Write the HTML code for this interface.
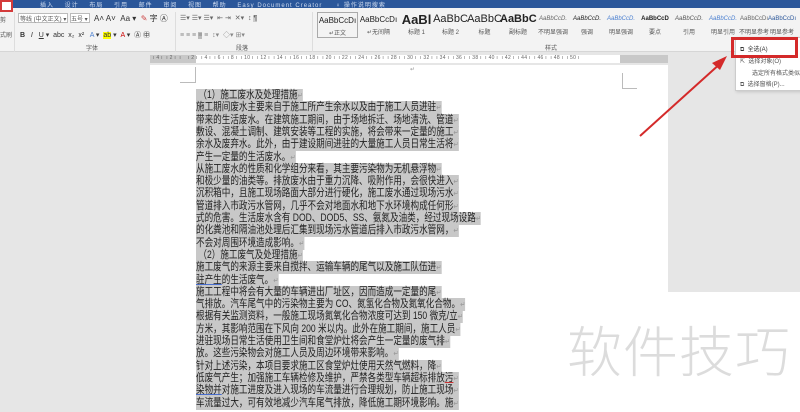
<!DOCTYPE html>
<html><head><meta charset="utf-8"><style>
*{margin:0;padding:0;box-sizing:border-box}
body{width:800px;height:412px;overflow:hidden;background:#e6e6e6;position:relative;font-family:"Liberation Sans","Noto Sans CJK SC",sans-serif}
.a{position:absolute}
.t{font-size:6px;color:#555;white-space:nowrap}
#page{left:150px;top:65px;width:518px;height:347px;background:#fff}
.ln{position:absolute;left:196px;height:12.3px;line-height:12.3px;font-size:11px;white-space:nowrap;color:#222;transform:scaleX(0.78);transform-origin:0 0}
.ln span{background:#c8c8c8;padding:0 0 1px 0}
.ln i{font-style:normal;color:#999;font-size:8px}
.sty{top:12px;width:52px;height:26px;text-align:center;color:#222}
.sty b{display:block;font-weight:normal;font-size:8px;height:15px;line-height:15px}
.sty small{display:block;font-size:6px;color:#555}
</style></head><body>
<div class="a" style="left:0;top:0;width:800px;height:8px;background:#2b579a"></div>
<div class="a t" style="left:40px;top:0;color:#cfdcf0;font-size:6px;letter-spacing:1px">插入 &nbsp;&nbsp; 设计 &nbsp;&nbsp; 布局 &nbsp;&nbsp; 引用 &nbsp;&nbsp; 邮件 &nbsp;&nbsp; 审阅 &nbsp;&nbsp; 视图 &nbsp;&nbsp; 帮助 &nbsp;&nbsp; Easy Document Creator &nbsp;&nbsp;&nbsp; ♀ 操作说明搜索</div>
<div class="a" style="left:0;top:8px;width:800px;height:44px;background:#f3f3f3;border-bottom:1px solid #d6d6d6"></div>
<div class="a" style="left:0;top:0;width:13px;height:12px;border:2px solid #d43b3b;background:#fff"></div>
<div class="a t" style="left:0;top:15px">剪</div><div class="a t" style="left:0;top:30px">式刷</div>
<div class="a" style="left:14px;top:12px;width:1px;height:40px;background:#ddd"></div>
<div class="a" style="left:18px;top:13px;width:50px;height:10px;border:1px solid #bbb;background:#fff"></div>
<div class="a t" style="left:20px;top:14px">等线 (中文正文) ▾</div>
<div class="a" style="left:70px;top:13px;width:20px;height:10px;border:1px solid #bbb;background:#fff"></div>
<div class="a t" style="left:71px;top:14px">五号 ▾</div>
<div class="a t" style="left:94px;top:13px;font-size:8px;color:#333">A˄ A˅ &nbsp;Aa ▾ &nbsp;<span style="color:#c44">✎</span> 字 Ⓐ</div>
<div class="a t" style="left:20px;top:30px;font-size:7px;color:#333"><b>B</b> &nbsp; <i>I</i> &nbsp; <u>U</u> ▾ &nbsp;abc &nbsp;x₂ &nbsp;x² &nbsp; <span style="color:#4a7fd0">A</span> ▾ &nbsp;<span style="background:#ff0">ab</span> ▾ &nbsp;<span style="color:#c00">A</span> ▾ &nbsp;Ⓐ ㊥</div>
<div class="a t" style="left:86px;top:43px">字体</div>
<div class="a" style="left:175px;top:12px;width:1px;height:40px;background:#ddd"></div>
<div class="a t" style="left:180px;top:14px;font-size:7px;color:#666">☰▾ ☰▾ ☰▾ &nbsp;⇤ ⇥ &nbsp;✕▾ &nbsp;↕ <span style="background:#ccc">¶</span></div>
<div class="a t" style="left:180px;top:30px;font-size:7px;color:#888">≡ ≡ ≡ <span style="background:#bbb">≡</span> ≡ &nbsp;↕▾ &nbsp;◇▾ ⊞▾</div>
<div class="a t" style="left:236px;top:43px">段落</div>
<div class="a" style="left:312px;top:12px;width:1px;height:40px;background:#ddd"></div>
<div class="a sty" style="left:317px;border:1px solid #aaa;width:41px"><b>AaBbCcDı</b><small>↵正文</small></div>
<div class="a sty" style="left:358px;width:41px"><b>AaBbCcDı</b><small>↵无间隔</small></div>
<div class="a sty" style="left:399px;width:35px"><b style="font-size:13px;font-weight:bold">AaBl</b><small>标题 1</small></div>
<div class="a sty" style="left:433px;width:35px"><b style="font-size:11px">AaBbC</b><small>标题 2</small></div>
<div class="a sty" style="left:467px;width:35px"><b style="font-size:11px">AaBbC</b><small>标题</small></div>
<div class="a sty" style="left:500px;width:36px"><b style="font-size:11px;font-weight:bold">AaBbC</b><small>副标题</small></div>
<div class="a sty" style="left:535px;width:36px"><b style="font-style:italic;color:#666;font-size:6px">AaBbCcD.</b><small>不明显强调</small></div>
<div class="a sty" style="left:569px;width:36px"><b style="font-style:italic;font-size:6px">AaBbCcD.</b><small>强调</small></div>
<div class="a sty" style="left:603px;width:36px"><b style="font-style:italic;color:#4a7fd0;font-size:6px">AaBbCcD.</b><small>明显强调</small></div>
<div class="a sty" style="left:637px;width:36px"><b style="font-weight:bold;font-size:6px">AaBbCcD</b><small>要点</small></div>
<div class="a sty" style="left:671px;width:36px"><b style="font-style:italic;font-size:6px;color:#555">AaBbCcD.</b><small>引用</small></div>
<div class="a sty" style="left:705px;width:36px"><b style="font-style:italic;font-size:6px;color:#4a7fd0">AaBbCcD.</b><small>明显引用</small></div>
<div class="a sty" style="left:739px;width:30px"><b style="font-size:6px;color:#666">AaBbCcDı</b><small>不明显参考</small></div>
<div class="a sty" style="left:767px;width:30px"><b style="font-size:6px;color:#2b579a">AaBbCcDı</b><small>明显参考</small></div>
<div class="a t" style="left:545px;top:43px">样式</div>
<div class="a" style="left:150px;top:55px;width:518px;height:8px;background:#fff"></div>
<div class="a" style="left:150px;top:55px;width:46px;height:8px;background:#c8c8c8"></div>
<div class="a" style="left:620px;top:55px;width:48px;height:8px;background:#c8c8c8"></div>
<div class="a t" style="left:153px;top:55px;font-size:5px;color:#666;letter-spacing:0.3px">ı 4 ı &nbsp;ı 2 ı &nbsp;ı &nbsp;&nbsp;&nbsp;ı 2 ı &nbsp;ı 4 ı &nbsp;ı 6 ı &nbsp;ı 8 ı &nbsp;ı 10 ı &nbsp;ı 12 ı &nbsp;ı 14 ı &nbsp;ı 16 ı &nbsp;ı 18 ı &nbsp;ı 20 ı &nbsp;ı 22 ı &nbsp;ı 24 ı &nbsp;ı 26 ı &nbsp;ı 28 ı &nbsp;ı 30 ı &nbsp;ı 32 ı &nbsp;ı 34 ı &nbsp;ı 36 ı &nbsp;ı 38 ı &nbsp;ı 40 ı &nbsp;ı 42 ı &nbsp;ı 44 ı &nbsp;ı 46 ı &nbsp;ı 48 ı &nbsp;ı 50 ı</div>
<div class="a" id="page"></div>
<div class="a" style="left:668px;top:292px;width:132px;height:120px;background:#fff"></div>
<div class="a" style="left:195px;top:67px;width:1px;height:15px;background:#bbb"></div>
<div class="a" style="left:180px;top:82px;width:16px;height:1px;background:#bbb"></div>
<div class="a" style="left:622px;top:73px;width:1px;height:15px;background:#bbb"></div>
<div class="a" style="left:622px;top:88px;width:15px;height:1px;background:#bbb"></div>
<div class="a" style="left:410px;top:66px;font-size:6px;color:#999">↵</div>
<div class="ln" style="top:89px"><span>&nbsp;（1）施工废水及处理措施<i>↵</i></span></div>
<div class="ln" style="top:101.3px"><span>施工期间废水主要来自于施工所产生余水以及由于施工人员进驻<i>↵</i></span></div>
<div class="ln" style="top:113.6px"><span>带来的生活废水。在建筑施工期间，由于场地拆迁、场地清洗、管道<i>↵</i></span></div>
<div class="ln" style="top:125.9px"><span>敷设、混凝土调制、建筑安装等工程的实施，将会带来一定量的施工<i>↵</i></span></div>
<div class="ln" style="top:138.2px"><span>余水及废弃水。此外，由于建设期间进驻的大量施工人员日常生活将<i>↵</i></span></div>
<div class="ln" style="top:150.5px"><span>产生一定量的生活废水。<i>↵</i></span></div>
<div class="ln" style="top:162.8px"><span>从施工废水的性质和化学组分来看，其主要污染物为无机悬浮物<i>↵</i></span></div>
<div class="ln" style="top:175.1px"><span>和极少量的油类等。排放废水由于重力沉降、吸附作用，会很快进入<i>↵</i></span></div>
<div class="ln" style="top:187.4px"><span>沉积箱中，且施工现场路面大部分进行硬化，施工废水通过现场污水<i>↵</i></span></div>
<div class="ln" style="top:199.7px"><span>管道排入市政污水管网，几乎不会对地面水和地下水环境构成任何形<i>↵</i></span></div>
<div class="ln" style="top:212px"><span>式的危害。生活废水含有 DOD、DOD5、SS、氨氮及油类，经过现场设路<i>↵</i></span></div>
<div class="ln" style="top:224.3px"><span>的化粪池和隔油池处理后汇集到现场污水管道后排入市政污水管网，<i>↵</i></span></div>
<div class="ln" style="top:236.6px"><span>不会对周围环境造成影响。<i>↵</i></span></div>
<div class="ln" style="top:248.9px"><span>&nbsp;（2）施工废气及处理措施<i>↵</i></span></div>
<div class="ln" style="top:261.2px"><span>施工废气的来源主要来自搅拌、运输车辆的尾气以及施工队伍进<i>↵</i></span></div>
<div class="ln" style="top:273.5px"><span><u style="text-decoration-color:#4a6fd0">驻产生</u>的生活废气。<i>↵</i></span></div>
<div class="ln" style="top:285.8px"><span>施工工程中将会有大量的车辆进出厂址区，因而造成一定量的尾<i>↵</i></span></div>
<div class="ln" style="top:298.1px"><span>气排放。汽车尾气中的污染物主要为 CO、氮氢化合物及氮氧化合物。<i>↵</i></span></div>
<div class="ln" style="top:310.4px"><span>根据有关监测资料，一般施工现场氮氧化合物浓度可达到 150 微克/立<i>↵</i></span></div>
<div class="ln" style="top:322.7px"><span>方米，其影响范围在下风向 200 米以内。此外在施工期间，施工人员<i>↵</i></span></div>
<div class="ln" style="top:335px"><span>进驻现场日常生活使用卫生间和食堂炉灶将会产生一定量的废气排<i>↵</i></span></div>
<div class="ln" style="top:347.3px"><span>放。这些污染物会对施工人员及周边环境带来影响。<i>↵</i></span></div>
<div class="ln" style="top:359.6px"><span>针对上述污染，本项目要求施工区食堂炉灶使用天然气燃料，降<i>↵</i></span></div>
<div class="ln" style="top:371.9px"><span>低废气产生；加强施工车辆检修及维护，严禁各类型车辆超标排放<u style="text-decoration-color:#c33">污</u><i>↵</i></span></div>
<div class="ln" style="top:384.2px"><span><u style="text-decoration-color:#4a6fd0">染物并</u>对施工进度及进入现场的车流量进行合理规划，防止施工现场<i>↵</i></span></div>
<div class="ln" style="top:396.5px"><span>车流量过大，可有效地减少汽车尾气排放，降低施工期环境影响。施<i>↵</i></span></div>
<div class="a" style="left:567px;top:316px;font-size:55px;line-height:64px;color:#dcdcdc;font-family:'Noto Sans CJK SC',sans-serif;font-weight:300;letter-spacing:1px">软件技巧</div>
<div class="a" style="left:735px;top:37px;width:70px;height:54px;background:#fff;border:1px solid #ccc;box-shadow:1px 1px 3px rgba(0,0,0,.15)"></div>
<div class="a t" style="left:740px;top:44px;color:#333">⧉ &nbsp;全选(A)</div>
<div class="a t" style="left:740px;top:56px">⇱ &nbsp;选择对象(O)</div>
<div class="a t" style="left:752px;top:68px">选定所有格式类似的</div>
<div class="a t" style="left:740px;top:79px">⧉ &nbsp;选择窗格(P)...</div>
<div class="a" style="left:731px;top:37px;width:67px;height:21px;border:3px solid #d42a2a"></div>
<svg class="a" style="left:0;top:0" width="800" height="412"><line x1="640" y1="136" x2="722" y2="62" stroke="#d42a2a" stroke-width="2"/><polygon points="727,56 712,63 720,70" fill="#d42a2a"/></svg>
</body></html>
